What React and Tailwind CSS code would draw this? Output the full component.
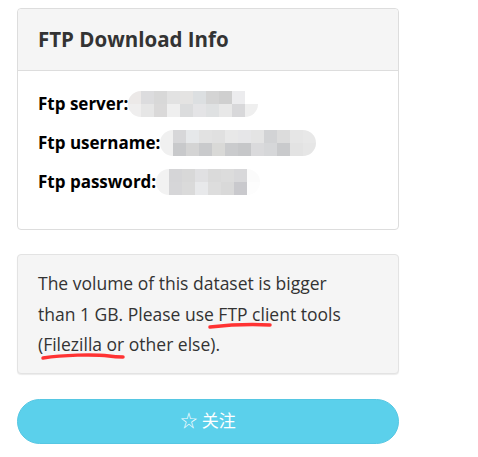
const server = [
  ["#ece9e8", "#dcdcde", "#d8d8d8", "#e2e2e2", "#e4e3e2", "#dcdfe1", "#d4d4d4", "#cfcfcf", "#ececee"],
  ["#efeeee", "#e6e6e6", "#dad9d9", "#efefef", "#dbdcdd", "#e4e4e6", "#dfe1e2", "#e8e8e8", "#d8d8da", "#efefef"],
];
const username = [
  ["#f0f0f0", "#d7d7d9", "#e6e8ea", "#e2e2e2", "#e0e0e0", "#e8e8e8", "#e6e6e8", "#e4e4e4", "#d2d3d5", "#dcdcdc", "#e6e6e6", "#e8e8e8"],
  ["#f0f0f0", "#c8c9cb", "#d4d4d4", "#c9cacc", "#d9d9d7", "#cacbcd", "#c6c7c9", "#dadadc", "#d6d7d9", "#c9cacc", "#e3e3e3", "#e6e6e6"],
];
const password = [
  ["#f2f2f2", "#d5d5d7", "#d8d8d8", "#e0e0e2", "#dadada", "#dcdcdc", "#d8d8da", "#fbfbfb"],
  ["#f2f2f2", "#d6d6d8", "#dadada", "#e8e9eb", "#dddddd", "#d9d9d9", "#c9c9cd", "#fdfdfd"],
];

function Blur({ rows }) {
  return (
    <span className="inline-flex flex-col rounded-full overflow-hidden align-middle">
      {rows.map((row, i) => (
        <span key={i} className="flex">
          {row.map((c, j) => (
            <span key={j} className="block w-[13px] h-[13px]" style={{ background: c }} />
          ))}
        </span>
      ))}
    </span>
  );
}

function Row({ label, rows }) {
  return (
    <div className="flex items-center h-[26px]">
      <span className="font-bold text-black">{label}</span>
      <Blur rows={rows} />
    </div>
  );
}

// red pen strokes drawn over the text
function Marked({ children, width, d }) {
  return (
    <span className="relative">
      {children}
      <svg className="absolute left-0 top-[21px] pointer-events-none overflow-visible" width={width} height="8">
        <path d={d} stroke="#ff3333" strokeWidth="3.5" strokeLinecap="round" fill="none" />
      </svg>
    </span>
  );
}

export default function App() {
  return (
    <div
      className="w-[478px] h-[457px] bg-white pt-2 pl-[17px]"
      style={{ fontFamily: '"Open Sans", "Noto Sans CJK SC", sans-serif' }}
    >
      <div className="w-[382px] border border-[#dddddd] rounded bg-white">
        <div className="bg-[#f5f5f5] border-b border-[#dddddd] h-[62px] flex items-center px-5 rounded-t">
          <h3 className="text-[20.5px] font-bold text-[#333333]">FTP Download Info</h3>
        </div>
        <div className="px-5 pt-[20px] pb-[34px] flex flex-col gap-[13px] text-[17px]">
          <Row label="Ftp server:" rows={server} />
          <Row label="Ftp username:" rows={username} />
          <Row label="Ftp password:" rows={password} />
        </div>
      </div>

      <div className="mt-6 w-[382px] bg-[#f5f5f5] border border-[#e3e3e3] rounded shadow-[0_1px_1px_rgba(0,0,0,0.08)] px-5 pt-[13px] pb-[13px] text-[17.5px] leading-[30.5px] text-[#333333] whitespace-nowrap">
        The volume of this dataset is bigger
        <br />
        than 1 GB. Please use{" "}
        <Marked width="60" d="M-8 4 C 10 2, 34 1, 52 2">FTP cli</Marked>ent tools
        <br />
        (
        <Marked width="80" d="M0 5 C 20 2, 50 1, 66 3 C 72 4, 78 4, 80 4">Filezilla or</Marked> other else).
      </div>

      <button className="mt-[25px] w-[382px] h-[45px] rounded-full bg-[#5bd0eb] border border-[#56c7e3] text-white text-[17px] flex items-center justify-center">
        ☆ 关注
      </button>
    </div>
  );
}
